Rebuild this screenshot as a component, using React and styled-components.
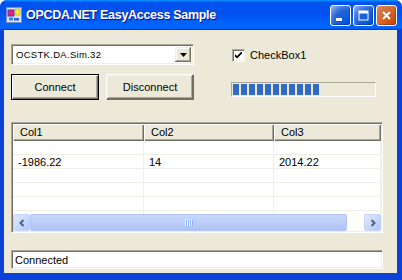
import styled, { createGlobalStyle } from "styled-components";

const GlobalStyle = createGlobalStyle`
  html, body {
    margin: 0;
    padding: 0;
    background: #ffffff;
  }
  body {
    font-family: "Liberation Sans", Arial, sans-serif;
    font-size: 11px;
    color: #000;
  }
`;

const Window = styled.div`
  width: 402px;
  height: 280px;
  display: flex;
  flex-direction: column;
  background: #0842d6;
  border-radius: 7px 7px 0 0;
  overflow: hidden;
  box-sizing: border-box;
`;

const TitleBar = styled.div`
  height: 30px;
  flex-shrink: 0;
  display: flex;
  align-items: center;
  padding: 0 5px 0 6px;
  background: linear-gradient(
    180deg,
    #0997ff,
    #0053ee 8%,
    #0050ee 40%,
    #06f 88%,
    #06f 93%,
    #005bff 95%,
    #003dd7 96%,
    #003dd7
  );
  box-sizing: border-box;
`;

const Title = styled.div`
  flex: 1;
  margin-left: 4px;
  color: #fff;
  font-family: "Liberation Sans", Arial, sans-serif;
  font-weight: bold;
  font-size: 12.5px;
  letter-spacing: -0.3px;
  text-shadow: 1px 1px #0f1089;
  white-space: nowrap;
`;

const Controls = styled.div`
  display: flex;
  gap: 2px;
`;

const CtrlButton = styled.div`
  width: 21px;
  height: 21px;
  box-sizing: border-box;
  border: 1px solid #fff;
  border-radius: 3px;
  display: flex;
  align-items: center;
  justify-content: center;
  background: ${(p) =>
    p.$close
      ? "radial-gradient(circle at 90% 90%, #cc4600 0%, #dc6527 55%, #cd7546 70%, #e68b5c 100%)"
      : "radial-gradient(circle at 90% 90%, #0054e9 0%, #2263d5 55%, #4479e4 70%, #a3bbec 100%)"};
  box-shadow: inset -1px -1px 1px rgba(0, 0, 0, 0.25);
`;

const Client = styled.div`
  flex: 1;
  margin: 0 5px 7px 4px;
  background: #ece9d8;
  padding: 14px 0 0 7px;
  display: flex;
  flex-direction: column;
`;

const TopGrid = styled.div`
  display: grid;
  grid-template-columns: 183px 1fr;
  grid-template-rows: 21px 26px;
  column-gap: 37px;
  row-gap: 9px;
`;

const Combo = styled.div`
  box-sizing: border-box;
  height: 21px;
  display: flex;
  align-items: center;
  background: #fff;
  border: 1px solid;
  border-color: #aca899 #fff #fff #aca899;
  box-shadow: inset 1px 1px #716f64, inset -1px -1px #f1efe2;
  padding: 2px;
`;

const ComboText = styled.div`
  flex: 1;
  padding-left: 2px;
  font-size: 9.5px;
  letter-spacing: 0.3px;
`;

const ComboButton = styled.div`
  width: 16px;
  height: 15px;
  box-sizing: border-box;
  background: #ece9d8;
  display: flex;
  align-items: center;
  justify-content: center;
  box-shadow: inset -1px -1px #716f64, inset 1px 1px #f1efe2,
    inset -2px -2px #aca899, inset 2px 2px #fff;
`;

const CheckRow = styled.label`
  display: flex;
  align-items: center;
  gap: 5px;
  margin-left: 1px;
  padding-top: 1px;
`;

const CheckBox = styled.div`
  width: 13px;
  height: 13px;
  box-sizing: border-box;
  background: #fff;
  border: 1px solid;
  border-color: #aca899 #fff #fff #aca899;
  box-shadow: inset 1px 1px #716f64, inset -1px -1px #f1efe2;
  display: flex;
  align-items: center;
  justify-content: center;
`;

const ButtonRow = styled.div`
  display: flex;
  gap: 7px;
`;

const Button = styled.div`
  width: ${(p) => p.$w}px;
  height: 26px;
  box-sizing: border-box;
  display: flex;
  align-items: center;
  justify-content: center;
  background: #ece9d8;
  border: 1px solid ${(p) => (p.$default ? "#000" : "#fff")};
  box-shadow: ${(p) =>
    p.$default
      ? "inset 1px 1px #fff, inset -1px -1px #716f64, inset -2px -2px #aca899"
      : "inset -1px -1px #716f64, inset 1px 1px #f1efe2, inset -2px -2px #aca899"};
  border-color: ${(p) => (p.$default ? "#000" : "#fff #716f64 #716f64 #fff")};
  padding-bottom: 1px;
`;

const Progress = styled.div`
  width: 145px;
  height: 15px;
  box-sizing: border-box;
  margin-top: 8px;
  border: 1px solid;
  border-color: #aca899 #fff #fff #aca899;
  padding: 1px;
  display: flex;
  gap: 2px;
`;

const Block = styled.div`
  width: 6px;
  height: 11px;
  background: #316ac5;
`;

const ListView = styled.div`
  margin-top: 22px;
  width: 372px;
  height: 111px;
  box-sizing: border-box;
  background: #fff;
  border: 1px solid;
  border-color: #aca899 #fff #fff #aca899;
  box-shadow: inset 1px 1px #716f64, inset -1px -1px #f1efe2;
  padding: 1px;
  display: flex;
  flex-direction: column;
  overflow: hidden;
`;

const cols = "131px 130px 1fr";

const HeaderRow = styled.div`
  display: grid;
  grid-template-columns: ${cols};
  height: 17px;
  flex-shrink: 0;
`;

const HeaderCell = styled.div`
  box-sizing: border-box;
  background: #ece9d8;
  display: flex;
  align-items: center;
  padding: 0 0 1px 7px;
  box-shadow: inset 1px 1px #fff, inset -1px -1px #716f64,
    inset -2px -2px #aca899;
`;

const Rows = styled.div`
  flex: 1;
  overflow: hidden;
`;

const Row = styled.div`
  display: grid;
  grid-template-columns: ${cols};
  height: 14px;
  border-bottom: 1px solid #f0efe6;
  box-sizing: border-box;
`;

const Cell = styled.div`
  display: flex;
  align-items: center;
  padding-left: 5px;
  border-right: 1px solid #f0efe6;
  white-space: nowrap;
`;

const HScroll = styled.div`
  height: 17px;
  flex-shrink: 0;
  display: flex;
  background: #fefefb;
`;

const ScrollButton = styled.div`
  width: 17px;
  height: 17px;
  box-sizing: border-box;
  border: 1px solid #c3d3fd;
  border-radius: 2px;
  background: linear-gradient(135deg, #e1eafe, #b4c8f6);
  display: flex;
  align-items: center;
  justify-content: center;
`;

const Thumb = styled.div`
  width: ${(p) => p.$w}px;
  height: 17px;
  box-sizing: border-box;
  border: 1px solid #b0c4f5;
  border-radius: 2px;
  background: linear-gradient(180deg, #cad8fd, #b9cbf7 60%, #aec3f3);
  display: flex;
  align-items: center;
  justify-content: center;
`;

const Track = styled.div`
  flex: 1;
`;

const Status = styled.div`
  margin-top: 17px;
  width: 372px;
  height: 19px;
  box-sizing: border-box;
  background: #fff;
  border: 1px solid;
  border-color: #aca899 #fff #fff #aca899;
  box-shadow: inset 1px 1px #716f64, inset -1px -1px #f1efe2;
  display: flex;
  align-items: center;
  padding-left: 3px;
`;

const AppIcon = () => (
  <svg width="16" height="16" viewBox="0 0 16 16">
    <rect x="0.5" y="0.5" width="15" height="15" fill="#dfe4f2" stroke="#7d8fc4" />
    <rect x="2" y="3" width="6" height="6" fill="#ee1f6a" stroke="#3a3ad0" />
    <rect x="9" y="2" width="5" height="6" fill="#fbe92a" stroke="#b0a020" strokeWidth="0.6" />
    <rect x="3" y="10.5" width="4" height="3" fill="#3a80f0" />
    <rect x="8" y="11" width="5" height="2.5" fill="#2a60d8" />
  </svg>
);

const ArrowDown = () => (
  <svg width="7" height="4" viewBox="0 0 7 4">
    <path d="M0 0h7L3.5 4z" fill="#000" />
  </svg>
);

const Chevron = ({ dir }) => (
  <svg width="8" height="8" viewBox="0 0 8 8">
    <path
      d={dir === "left" ? "M5.5 1L2.5 4l3 3" : "M2.5 1l3 3-3 3"}
      fill="none"
      stroke="#4d6185"
      strokeWidth="2"
    />
  </svg>
);

const Grip = () => (
  <svg width="8" height="7" viewBox="0 0 8 7">
    {[0, 2, 4, 6].map((x) => (
      <rect key={x} x={x} y="0" width="1" height="7" fill="#eef4fe" />
    ))}
    {[1, 3, 5, 7].map((x) => (
      <rect key={x} x={x} y="1" width="1" height="6" fill="#8cb0f8" />
    ))}
  </svg>
);

const rows = [
  ["", "", ""],
  ["-1986.22", "14", "2014.22"],
  ["", "", ""],
  ["", "", ""],
  ["", "", ""],
  ["", "", ""],
];

export default function App() {
  return (
    <>
      <GlobalStyle />
      <Window>
        <TitleBar>
          <AppIcon />
          <Title>OPCDA.NET EasyAccess Sample</Title>
          <Controls>
            <CtrlButton>
              <svg width="13" height="13" viewBox="0 0 13 13">
                <rect x="2" y="9" width="6" height="3" fill="#fff" />
              </svg>
            </CtrlButton>
            <CtrlButton>
              <svg width="13" height="13" viewBox="0 0 13 13">
                <rect x="2" y="2" width="9" height="9" fill="none" stroke="#fff" strokeWidth="1" />
                <rect x="2" y="2" width="9" height="2.5" fill="#fff" />
              </svg>
            </CtrlButton>
            <CtrlButton $close>
              <svg width="13" height="13" viewBox="0 0 13 13">
                <path d="M3 3l7 7M10 3l-7 7" stroke="#fff" strokeWidth="2" />
              </svg>
            </CtrlButton>
          </Controls>
        </TitleBar>
        <Client>
          <TopGrid>
            <Combo>
              <ComboText>OCSTK.DA.Sim.32</ComboText>
              <ComboButton>
                <ArrowDown />
              </ComboButton>
            </Combo>
            <CheckRow>
              <CheckBox>
                <svg width="7" height="7" viewBox="0 0 7 7">
                  <path d="M0 2l2 2 5-5v2.5L2 6.5 0 4.5z" fill="#000" />
                </svg>
              </CheckBox>
              CheckBox1
            </CheckRow>
            <ButtonRow>
              <Button $w={88} $default>
                Connect
              </Button>
              <Button $w={88}>Disconnect</Button>
            </ButtonRow>
            <Progress>
              {Array.from({ length: 11 }).map((_, i) => (
                <Block key={i} />
              ))}
            </Progress>
          </TopGrid>
          <ListView>
            <HeaderRow>
              <HeaderCell>Col1</HeaderCell>
              <HeaderCell>Col2</HeaderCell>
              <HeaderCell>Col3</HeaderCell>
            </HeaderRow>
            <Rows>
              {rows.map((r, i) => (
                <Row key={i}>
                  {r.map((c, j) => (
                    <Cell key={j}>{c}</Cell>
                  ))}
                </Row>
              ))}
            </Rows>
            <HScroll>
              <ScrollButton>
                <Chevron dir="left" />
              </ScrollButton>
              <Thumb $w={317}>
                <Grip />
              </Thumb>
              <Track />
              <ScrollButton>
                <Chevron dir="right" />
              </ScrollButton>
            </HScroll>
          </ListView>
          <Status>Connected</Status>
        </Client>
      </Window>
    </>
  );
}
